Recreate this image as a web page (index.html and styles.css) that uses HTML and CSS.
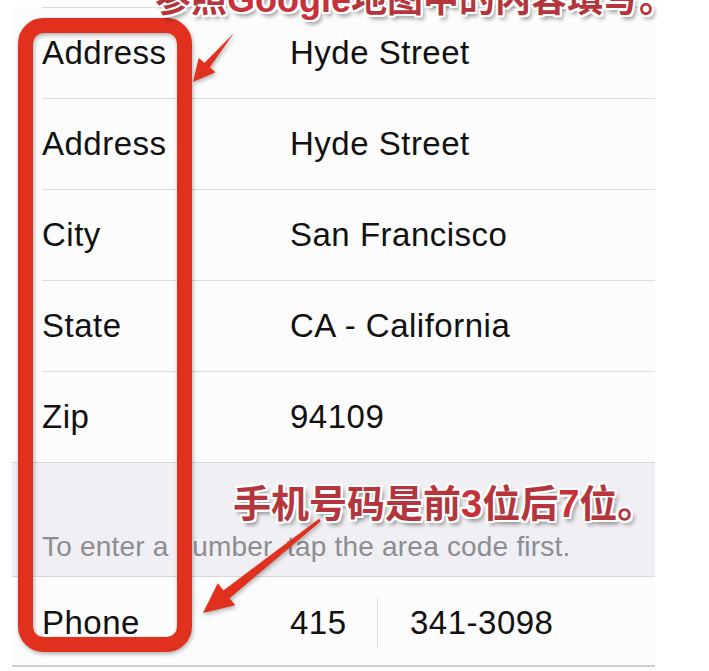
FILE: index.html
```html
<!DOCTYPE html>
<html>
<head>
  <meta charset="UTF-8">
  <title>Address</title>
  <link rel="stylesheet" href="styles.css">
</head>
<body>
  <div class="page">
    <div class="form">
      <div class="group">
        <div class="row"><span class="label">Address</span><span class="value">Hyde Street</span></div>
        <div class="row"><span class="label">Address</span><span class="value">Hyde Street</span></div>
        <div class="row"><span class="label">City</span><span class="value">San Francisco</span></div>
        <div class="row"><span class="label">State</span><span class="value">CA - California</span></div>
        <div class="row"><span class="label">Zip</span><span class="value">94109</span></div>
      </div>
      <div class="footer-note">To enter a number, tap the area code first.</div>
      <div class="group group-phone">
        <div class="row"><span class="label">Phone</span><span class="value area">415</span><span class="value number">341-3098</span></div>
      </div>
    </div>

    <!-- red markup drawn over the form -->
    <svg class="markup" width="709" height="671" viewBox="0 0 709 671">
      <rect x="25.5" y="25.5" width="159" height="619" rx="18" fill="none" stroke="#e2301f" stroke-width="15"/>
      <polygon points="234,33 209.8,67.3 215.5,72.2 193,82 198.7,58 204.4,62.9" fill="#e2301f"/>
      <polygon points="320.9,521.2 229.6,598.2 235.2,605.3 203,613 217.8,583.3 223.4,590.4 319.1,518.8" fill="#e2301f"/>
    </svg>

    <p class="note note-top">参照<b>Google</b>地图中的内容填写。</p>
    <p class="note note-phone">手机号码是前<b>3</b>位后<b>7</b>位。</p>
  </div>
</body>
</html>
```

FILE: styles.css
```css
body {
  margin: 0;
  background: #fff;
  font-family: "Liberation Sans", Arial, sans-serif;
}

.page {
  position: relative;
  width: 709px;
  height: 671px;
  overflow: hidden;
}

.form {
  width: 643px;
  margin-left: 12px;
  padding-top: 7px;
}

.group {
  background: #fcfcfc;
}

.row {
  box-sizing: border-box;
  height: 91px;
  margin-left: 30px;
  border-top: 1px solid #dcdce0;
  display: flex;
  align-items: center;
  font-size: 33px;
  letter-spacing: 0.5px;
  color: #111;
}

.label {
  width: 248px;
}

.footer-note {
  box-sizing: border-box;
  height: 115px;
  padding: 0 0 13px 30px;
  display: flex;
  align-items: flex-end;
  background: #efeff4;
  border-top: 1px solid #d8d8dc;
  border-bottom: 1px solid #d8d8dc;
  font-size: 28px;
  letter-spacing: 0.2px;
  color: #8d8d92;
}

.group-phone {
  border-bottom: 2px solid #cfcfd3;
}

.group-phone .row {
  height: 88px;
  border-top: none;
  padding-top: 4px;
}

.area {
  width: 87px;
}

.number {
  height: 50px;
  display: flex;
  align-items: center;
  padding-left: 32px;
  border-left: 1px solid #e0e0e4;
}

.markup {
  position: absolute;
  top: 0;
  left: 0;
  filter: drop-shadow(1px 2px 2px rgba(0, 0, 0, 0.3));
}

.note {
  position: absolute;
  margin: 0;
  font-family: "Noto Sans CJK SC", sans-serif;
  font-weight: 700;
  font-size: 36px;
  line-height: 1;
  white-space: nowrap;
  color: #b4353b;
  text-shadow:
    -2px -2px 0 #fff, 2px -2px 0 #fff, -2px 2px 0 #fff, 2px 2px 0 #fff,
    0 -2px 0 #fff, 0 2px 0 #fff, -2px 0 0 #fff, 2px 0 0 #fff,
    3px 4px 4px rgba(0, 0, 0, 0.45);
}

.note b {
  font-family: "Liberation Sans", Arial, sans-serif;
  color: #c8303a;
}

.note-top {
  left: 155px;
  top: -22px;
}

.note-phone {
  left: 233px;
  top: 482px;
  font-size: 38px;
}
```
